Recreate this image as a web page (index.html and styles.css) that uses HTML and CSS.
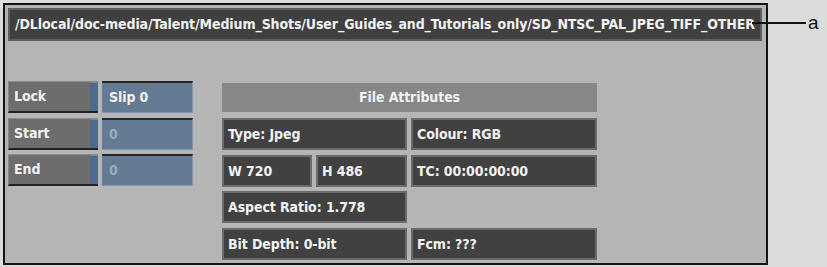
FILE: index.html
```html
<!DOCTYPE html>
<html lang="en">

<head>
    <meta charset="UTF-8">
    <title>File Attributes</title>
    <link rel="stylesheet" href="styles.css">
</head>

<body>
    <div class="stage">
        <div class="panel">
            <div class="path-bar">/DLlocal/doc-media/Talent/Medium_Shots/User_Guides_and_Tutorials_only/SD_NTSC_PAL_JPEG_TIFF_OTHER</div>
            <div class="content">
                <div class="controls">
                    <div class="control-row">
                        <div class="btn"><span class="btn-label">Lock</span><span class="btn-tab"></span></div>
                        <div class="field">Slip 0</div>
                    </div>
                    <div class="control-row">
                        <div class="btn"><span class="btn-label">Start</span><span class="btn-tab"></span></div>
                        <div class="field dim">0</div>
                    </div>
                    <div class="control-row">
                        <div class="btn"><span class="btn-label">End</span><span class="btn-tab"></span></div>
                        <div class="field dim">0</div>
                    </div>
                </div>
                <div class="attributes">
                    <div class="attr-header">File Attributes</div>
                    <div class="attr-grid">
                        <div class="cell span-2">Type: Jpeg</div>
                        <div class="cell">Colour: RGB</div>
                        <div class="cell">W 720</div>
                        <div class="cell">H 486</div>
                        <div class="cell">TC: 00:00:00:00</div>
                        <div class="cell span-2">Aspect Ratio: 1.778</div>
                        <div class="empty"></div>
                        <div class="cell span-2">Bit Depth: 0-bit</div>
                        <div class="cell">Fcm: ???</div>
                    </div>
                </div>
            </div>
        </div>
        <div class="callout">
            <span class="callout-line"></span>
            <span class="callout-label">a</span>
        </div>
    </div>
</body>

</html>
```

FILE: styles.css
```css
* {
    margin: 0;
    padding: 0;
    box-sizing: border-box;
}

body {
    background-color: #dcdcdc;
    font-family: 'DejaVu Sans', sans-serif;
    font-stretch: condensed;
    font-weight: bold;
    font-size: 14px;
    letter-spacing: -0.1px;
    color: #f2f2f2;
}

.stage {
    position: relative;
    width: 827px;
    height: 267px;
    padding: 3px 0 0 3px;
}

.panel {
    width: 765px;
    height: 262px;
    border: 2px solid #141414;
    background-color: #b5b5b5;
    padding: 3px 4px 0 3px;
}

.path-bar {
    height: 33px;
    background-color: #404040;
    border: 2px solid #5e5e5e;
    padding-left: 5px;
    line-height: 29px;
    white-space: nowrap;
    overflow: hidden;
}

.content {
    display: flex;
    gap: 29px;
    margin-top: 40px;
}

.controls {
    display: flex;
    flex-direction: column;
    gap: 4.5px;
}

.control-row {
    display: flex;
    gap: 4px;
    height: 32px;
}

.btn {
    display: flex;
    width: 90px;
    background-color: #6d6d6d;
    border-top: 1px solid #8c8c8c;
    border-left: 1px solid #858585;
    border-bottom: 2px solid #232323;
}

.btn-label {
    flex: 1;
    padding-left: 5px;
    line-height: 29px;
}

.btn-tab {
    width: 8px;
    background-color: #4f6a8f;
    border-top: 1px solid #7088a8;
}

.field {
    width: 91px;
    background-color: #657b94;
    border-top: 2px solid #262626;
    border-right: 1px solid #8496ac;
    border-bottom: 1px solid #8496ac;
    padding-left: 7px;
    line-height: 28px;
}

.field.dim {
    color: #9cabbd;
}

.attributes {
    padding-top: 2px;
    width: 375px;
}

.attr-header {
    height: 29px;
    background-color: #878787;
    text-align: center;
    line-height: 29px;
    margin-bottom: 6px;
}

.attr-grid {
    display: grid;
    grid-template-columns: 90px 91px 186px;
    grid-auto-rows: 32px;
    column-gap: 4px;
    row-gap: 4.5px;
}

.cell {
    background-color: #414141;
    border: 2px solid #6b6b6b;
    padding-left: 4px;
    line-height: 28px;
    white-space: nowrap;
}

.span-2 {
    grid-column: span 2;
}

.callout {
    position: absolute;
    left: 752px;
    top: 13px;
    display: flex;
    align-items: center;
    height: 20px;
}

.callout-line {
    width: 54px;
    height: 2px;
    background-color: #111;
}

.callout-label {
    margin-left: 2px;
    font-family: 'Liberation Sans', Arial, sans-serif;
    font-stretch: normal;
    font-weight: normal;
    letter-spacing: 0;
    font-size: 19px;
    color: #111;
    line-height: 20px;
}
```
